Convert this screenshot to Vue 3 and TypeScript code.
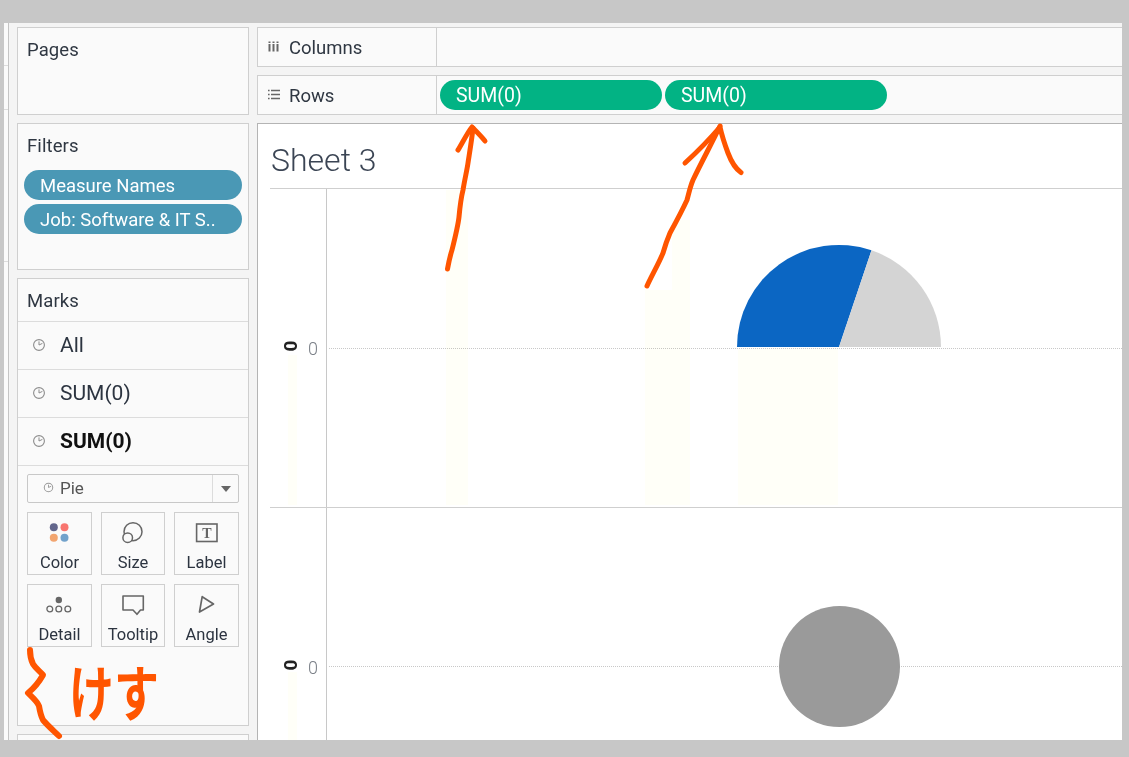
<script setup lang="ts">
const markRows: { label: string; bold?: boolean }[] = [
  { label: 'All' },
  { label: 'SUM(0)' },
  { label: 'SUM(0)', bold: true },
]
const filters: string[] = ['Measure Names', 'Job: Software & IT S..']
const rowPills: string[] = ['SUM(0)', 'SUM(0)']
const ghosts: number[][] = [
  [446, 190, 22, 315],
  [645, 290, 45, 215],
  [672, 220, 18, 70],
  [738, 349, 100, 156],
  [288, 355, 9, 150],
  [288, 672, 9, 68],
]
const strokes: string[] = [
  'M447.5 269 C449 261 450 256 452 250 C455 238 458 226 459 217 C460 206 461 198 463 190 C465 178 467 170 468 163 C470 150 472 138 473 128',
  'M458 150 C462 144 467 133 472 127 C476 131 481 136 485 141',
  'M647 286 C652 275 658 265 663 253 C665 246 667 240 670 233 C676 222 682 211 687 200 C689 193 690 187 693 180 C702 161 712 143 720 126',
  'M685 163 C697 152 709 140 720 127 C722 136 725 145 728 153 C731 161 736 169 741 172.5',
]
const brace =
  'M30 650 C30 656 31 660 33 664 C36 669 41 672 43 675 C39 682 33 689 28 693 C32 697 37 701 39 706 C40 712 41 716 43 720 C48 726 54 731 59 736'
</script>

<template>
  <div class="page">
    <div class="window">
      <aside class="strip">
        <div class="strip-cell s1"></div>
        <div class="strip-cell s2"></div>
        <div class="strip-cell s3"></div>
        <div class="strip-cell s4"></div>
      </aside>

      <section class="side">
        <div class="card pages"><h3 class="card-title">Pages</h3></div>

        <div class="card filters">
          <h3 class="card-title">Filters</h3>
          <div class="filter-list">
            <div v-for="f in filters" :key="f" class="pill blue">{{ f }}</div>
          </div>
        </div>

        <div class="card marks">
          <h3 class="marks-title">Marks</h3>
          <div v-for="(m, i) in markRows" :key="i" class="mark-row" :class="{ bold: m.bold }">
            <svg class="pie-icon" width="14" height="14" viewBox="0 0 14 14">
              <circle cx="7" cy="7" r="5.4" fill="none" stroke="#8c8c8c" stroke-width="1.1" />
              <path d="M7 7V3.4M7 7l3.4-1.6" fill="none" stroke="#8c8c8c" stroke-width="1" />
            </svg>
            <span>{{ m.label }}</span>
          </div>

          <div class="marks-body">
            <div class="select">
              <div class="select-main">
                <svg width="11" height="11" viewBox="0 0 14 14">
                  <circle cx="7" cy="7" r="5.4" fill="none" stroke="#999" stroke-width="1.3" />
                  <path d="M7 7V3.4M7 7l3.4-1.6" fill="none" stroke="#999" stroke-width="1.2" />
                </svg>
                <span>Pie</span>
              </div>
              <div class="select-arrow"><i></i></div>
            </div>

            <div class="btn-grid">
              <div class="mark-btn">
                <svg width="24" height="24" viewBox="0 0 24 24">
                  <circle cx="5.8" cy="7.3" r="4" fill="#62668c" />
                  <circle cx="16.5" cy="7.3" r="4" fill="#f8756f" />
                  <circle cx="5.8" cy="17.7" r="4" fill="#f2a570" />
                  <circle cx="16.5" cy="17.7" r="4" fill="#72a2cb" />
                </svg>
                <span>Color</span>
              </div>
              <div class="mark-btn">
                <svg width="24" height="24" viewBox="0 0 24 24">
                  <circle cx="12" cy="11.7" r="9" fill="none" stroke="#666" stroke-width="1.5" />
                  <circle cx="6.7" cy="17.7" r="4.8" fill="#fafafa" stroke="#666" stroke-width="1.5" />
                </svg>
                <span>Size</span>
              </div>
              <div class="mark-btn">
                <svg width="24" height="24" viewBox="0 0 24 24">
                  <rect x="1.6" y="4" width="20.4" height="17.5" fill="none" stroke="#666" stroke-width="1.6" />
                  <text x="11.8" y="17.5" class="t-glyph" text-anchor="middle">T</text>
                </svg>
                <span>Label</span>
              </div>
              <div class="mark-btn">
                <svg width="24" height="24" viewBox="0 0 24 24">
                  <circle cx="10.8" cy="8" r="3.2" fill="#666" />
                  <circle cx="1.8" cy="17" r="2.9" fill="none" stroke="#666" stroke-width="1.3" />
                  <circle cx="10.8" cy="17" r="2.9" fill="none" stroke="#666" stroke-width="1.3" />
                  <circle cx="19.8" cy="17" r="2.9" fill="none" stroke="#666" stroke-width="1.3" />
                </svg>
                <span>Detail</span>
              </div>
              <div class="mark-btn">
                <svg width="24" height="24" viewBox="0 0 24 24">
                  <path d="M2 4H22.3V18H19.5L16 22.3L12 18H2Z" fill="none" stroke="#666" stroke-width="1.6" stroke-linejoin="round" />
                </svg>
                <span>Tooltip</span>
              </div>
              <div class="mark-btn">
                <svg width="24" height="24" viewBox="0 0 24 24">
                  <path d="M7.2 4.7L18.5 12L4.5 20Z" fill="none" stroke="#666" stroke-width="1.7" stroke-linejoin="round" />
                </svg>
                <span>Angle</span>
              </div>
            </div>
          </div>
        </div>

        <div class="card next"></div>
      </section>

      <section class="main">
        <div class="shelf">
          <div class="shelf-label">
            <svg width="14" height="12" viewBox="0 0 14 12">
              <path d="M2.5 3v7.5M6.5 3v7.5M10.5 3v7.5" stroke="#666" stroke-width="2" />
              <path d="M2.5 0.5v1.4M6.5 0.5v1.4M10.5 0.5v1.4" stroke="#666" stroke-width="2" />
            </svg>
            <span>Columns</span>
          </div>
          <div class="shelf-body"></div>
        </div>
        <div class="shelf">
          <div class="shelf-label">
            <svg width="14" height="12" viewBox="0 0 14 12">
              <path d="M4 1.5H13M4 5.5H13M4 9.5H13" stroke="#666" stroke-width="1.6" />
              <path d="M1 1.5H2.6M1 5.5H2.6M1 9.5H2.6" stroke="#666" stroke-width="1.6" />
            </svg>
            <span>Rows</span>
          </div>
          <div class="shelf-body pills">
            <div v-for="(p, i) in rowPills" :key="i" class="pill green">{{ p }}</div>
          </div>
        </div>

        <div class="canvas">
          <h2 class="sheet-title">Sheet 3</h2>
          <div class="pane first">
            <div class="axis-title"><span>0</span></div>
            <div class="axis-values"><span>0</span></div>
            <div class="plot">
              <div class="zero"></div>
              <svg class="mark-pie" width="206" height="104" viewBox="0 0 206 104">
                <path d="M103 103 L1 103 A102 102 0 0 1 135.5 6.3 Z" fill="#0b66c3" />
                <path d="M103 103 L135.5 6.3 A102 102 0 0 1 205 103 Z" fill="#d4d4d4" />
              </svg>
            </div>
          </div>
          <div class="pane second">
            <div class="axis-title"><span>0</span></div>
            <div class="axis-values"><span>0</span></div>
            <div class="plot">
              <div class="zero"></div>
              <div class="mark-circle"></div>
            </div>
          </div>
        </div>
      </section>
    </div>

    <svg class="overlay" width="1129" height="757" viewBox="0 0 1129 757">
      <rect v-for="(g, i) in ghosts" :key="i" class="ghost" :x="g[0]" :y="g[1]" :width="g[2]" :height="g[3]" />
      <path v-for="(d, i) in strokes" :key="'s' + i" :d="d" fill="none" stroke="#ff5500" stroke-width="5" stroke-linecap="round" stroke-linejoin="round" />
      <path :d="brace" fill="none" stroke="#ff5500" stroke-width="6" stroke-linecap="round" stroke-linejoin="round" />
    </svg>
    <div class="scribble">けす</div>
  </div>
</template>

<style scoped>
.page {
  position: relative;
  width: 1129px;
  height: 757px;
  box-sizing: border-box;
  padding: 23px 7px 17px 4px;
  background: #c7c7c7;
  overflow: hidden;
  font-family: Roboto, "Liberation Sans", sans-serif;
  color: #2f3742;
}
.window {
  display: flex;
  height: 717px;
  background: #f4f4f4;
  overflow: hidden;
}
.strip {
  width: 4px;
  flex: none;
  border-right: 1px solid #c4c4c4;
  display: flex;
  flex-direction: column;
  background: #fafafa;
}
.strip-cell { border-bottom: 1px solid #dcdcdc; }
.s1 { height: 42px; }
.s2 { height: 43px; }
.s3 { height: 151px; }
.s4 { flex: 1; border-bottom: 0; }

.side {
  width: 232px;
  flex: none;
  margin-left: 8px;
  padding-top: 4px;
  display: flex;
  flex-direction: column;
  gap: 8px;
}
.card {
  box-sizing: border-box;
  background: #fafafa;
  border: 1px solid #cfcfcf;
  flex: none;
}
.pages { height: 88px; }
.filters { height: 147px; }
.marks { height: 448px; }
.next { height: 40px; }
.card-title, .marks-title {
  margin: 0;
  font-size: 18.5px;
  font-weight: 400;
  line-height: 22px;
  padding: 11px 0 0 9px;
  letter-spacing: 0.1px;
}
.filter-list {
  display: flex;
  flex-direction: column;
  gap: 4px;
  padding: 13px 6px 0;
}
.pill {
  box-sizing: border-box;
  height: 30px;
  border-radius: 15px;
  color: #fff;
  font-size: 18.5px;
  line-height: 30px;
  padding: 1px 0 0 16px;
  white-space: nowrap;
  overflow: hidden;
}
.blue { background: #4a98b5; }
.green { background: #02b384; width: 222px; font-size: 19.5px; }

.marks-title {
  height: 43px;
  box-sizing: border-box;
  padding-top: 11px;
  border-bottom: 1px solid #dcdcdc;
}
.mark-row {
  box-sizing: border-box;
  height: 48px;
  display: flex;
  align-items: center;
  gap: 14px;
  padding: 0 0 2px 14px;
  border-bottom: 1px solid #dcdcdc;
  font-size: 21px;
  color: #2c3440;
}
.mark-row.bold { font-weight: 700; color: #111; }
.marks-body { padding: 8px 9px 0; }
.select {
  box-sizing: border-box;
  height: 29px;
  display: flex;
  border: 1px solid #c8c8c8;
  border-radius: 2px;
}
.select-main {
  flex: 1;
  display: flex;
  align-items: center;
  gap: 6px;
  padding: 0 0 2px 15px;
  font-size: 17px;
  color: #555;
}
.select-arrow {
  width: 25px;
  border-left: 1px solid #dcdcdc;
  display: flex;
  align-items: center;
  justify-content: center;
}
.select-arrow i {
  width: 0;
  height: 0;
  border-left: 5px solid transparent;
  border-right: 5px solid transparent;
  border-top: 6px solid #666;
}
.btn-grid {
  display: grid;
  grid-template-columns: 65px 64px 65px;
  column-gap: 9px;
  row-gap: 9px;
  margin-top: 9px;
}
.mark-btn {
  box-sizing: border-box;
  height: 63px;
  border: 1px solid #cfcfcf;
  display: flex;
  flex-direction: column;
  align-items: center;
  padding-top: 7px;
  font-size: 16.5px;
  line-height: 20px;
  color: #2c3440;
}
.mark-btn svg { overflow: visible; margin-bottom: 9px; }
.t-glyph {
  font-family: "Liberation Serif", serif;
  font-weight: 700;
  font-size: 14px;
  fill: #666;
}

.main {
  flex: 1;
  min-width: 0;
  margin-left: 8px;
  padding-top: 4px;
  display: flex;
  flex-direction: column;
  gap: 8px;
}
.shelf {
  box-sizing: border-box;
  height: 40px;
  flex: none;
  display: flex;
  background: #fafafa;
  border: 1px solid #cfcfcf;
  border-right: 0;
}
.shelf-label {
  box-sizing: border-box;
  width: 179px;
  flex: none;
  border-right: 1px solid #cfcfcf;
  display: flex;
  align-items: center;
  gap: 8px;
  padding-left: 9px;
  font-size: 18.5px;
}
.shelf-label span { padding-top: 2px; }
.shelf-body { flex: 1; }
.shelf-body.pills {
  display: flex;
  gap: 3px;
  padding: 4px 0 0 3px;
}
.canvas {
  flex: 1;
  min-height: 0;
  background: #fff;
  border: 1px solid #b4b4b4;
  border-right: 0;
  border-bottom: 0;
  overflow: hidden;
}
.sheet-title {
  margin: 0 0 0 12px;
  height: 65px;
  box-sizing: border-box;
  padding: 16px 0 0 1px;
  border-bottom: 1px solid #cfcfcf;
  font-size: 32px;
  line-height: 40px;
  font-weight: 300;
  color: #3b4554;
}
.pane {
  display: flex;
  height: 318px;
  margin-left: 12px;
}
.pane.first { border-bottom: 1px solid #cfcfcf; }
.axis-title {
  width: 27px;
  flex: none;
  display: flex;
  align-items: center;
  justify-content: flex-end;
}
.axis-title span {
  display: block;
  transform: translate(0, -2px) rotate(-90deg);
  font-size: 19px;
  font-weight: 700;
  color: #222;
  line-height: 16px;
}
.axis-values {
  width: 30px;
  flex: none;
  box-sizing: border-box;
  border-right: 1px solid #c8c8c8;
  display: flex;
  align-items: center;
  justify-content: flex-end;
  padding-right: 8px;
  font-size: 18px;
  font-weight: 300;
  color: #7b8088;
}
.plot {
  position: relative;
  flex: 1;
}
.zero {
  position: absolute;
  left: 2px;
  right: 0;
  top: 158px;
  border-top: 1px dotted #c8c8c8;
}
.first .zero { top: 159px; }
.mark-pie {
  position: absolute;
  left: 409px;
  top: 55px;
}
.mark-circle {
  position: absolute;
  left: 452px;
  top: 98px;
  width: 121px;
  height: 121px;
  border-radius: 50%;
  background: #9a9a9a;
}
.overlay {
  position: absolute;
  left: 0;
  top: 0;
  pointer-events: none;
}
.ghost {
  fill: #fffff8;
  mix-blend-mode: multiply;
}
.scribble {
  position: absolute;
  left: 69px;
  top: 654px;
  font-family: "Noto Sans CJK JP", sans-serif;
  font-size: 45px;
  line-height: 72px;
  font-weight: 700;
  color: #ff5500;
  transform: scaleY(1.35);
  pointer-events: none;
}
</style>

<style>
html, body { margin: 0; padding: 0; background: #c7c7c7; }
</style>
